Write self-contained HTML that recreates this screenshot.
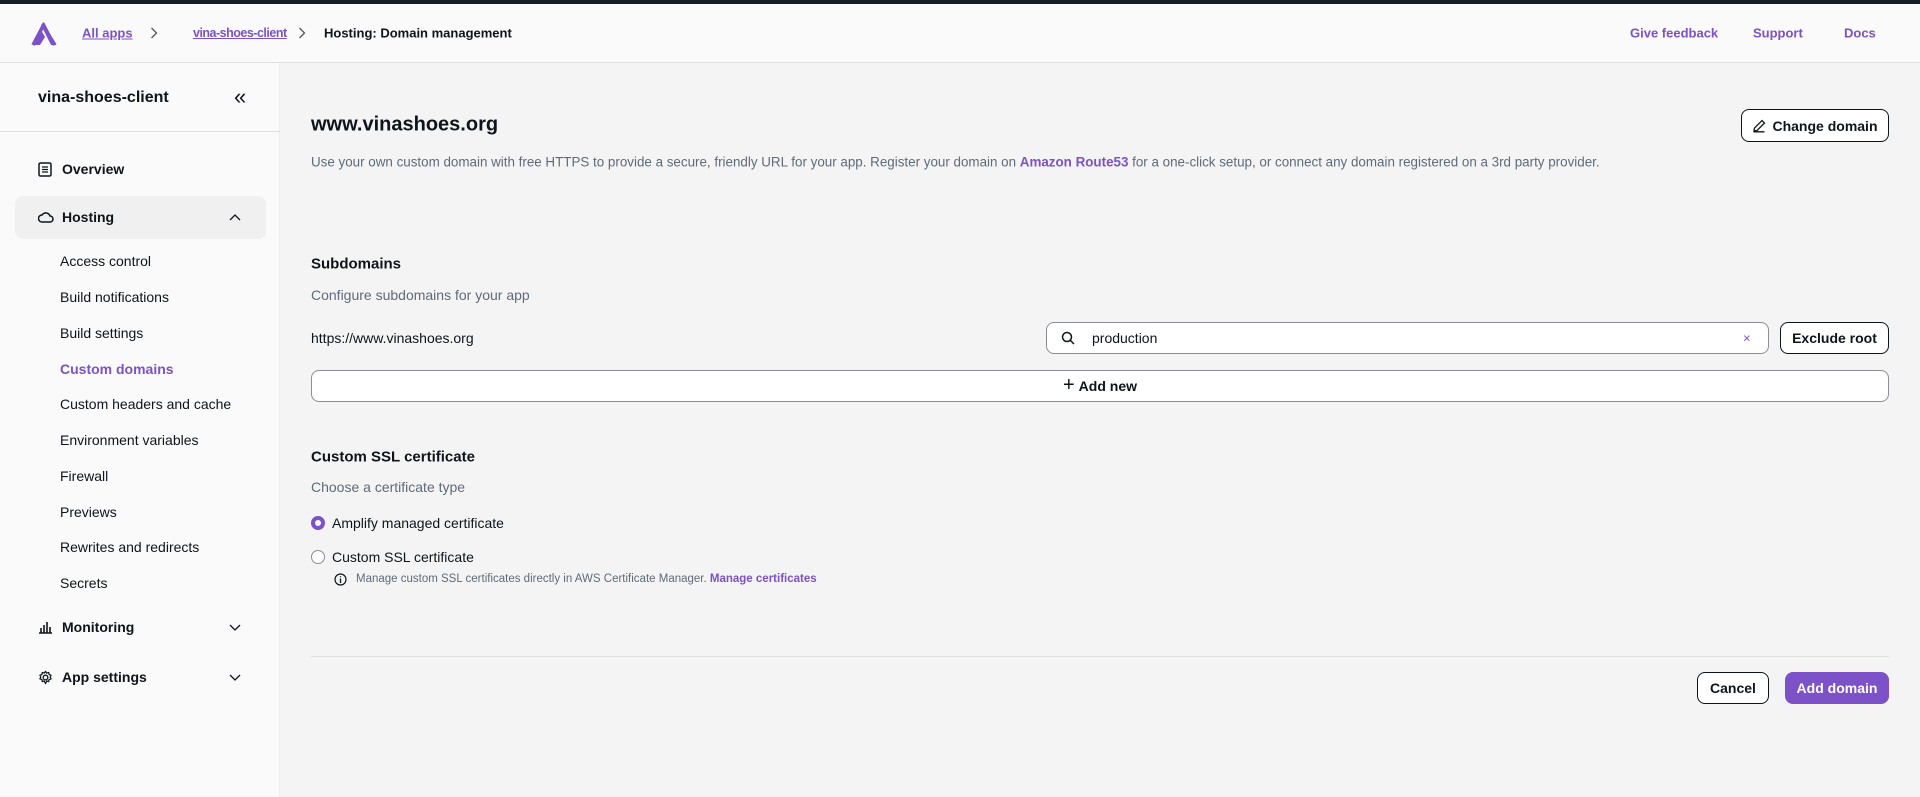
<!DOCTYPE html>
<html><head><meta charset="utf-8"><style>
*{box-sizing:border-box;margin:0;padding:0}
body{width:1920px;height:797px;overflow:hidden;font-family:"Liberation Sans",Arial,sans-serif;color:#0f141a;background:#f4f4f4;position:relative;font-size:14px}
.a{position:absolute}
.top{left:0;top:0;width:1920px;height:4px;background:#161d26}
.hdr{left:0;top:4px;width:1920px;height:59px;background:#fafafa;border-bottom:1px solid #e0e0e0}
.side{left:0;top:63px;width:280px;height:734px;background:#fafafa;border-right:1px solid #eee}
.lnk{color:#7b52c7;text-decoration:underline;font-weight:bold;font-size:13px}
.b{font-weight:bold}
.sub{color:#0f141a;font-size:14px}
.vc{transform:translateY(-50%)}
.btn{border:1px solid #0f141a;border-radius:8px;background:#fff;font-weight:bold;font-size:14px;display:flex;align-items:center;justify-content:center}
.g{color:#5f6b7a}
</style></head><body>
<div class="a top"></div>
<div class="a hdr"></div>
<svg class="a" style="left:31px;top:22px" width="26" height="24" viewBox="0 0 26 24"><path d="M2 23 L10 8 L14 15 L9 23Z M10 3 L13 0 L25 23 L20 23Z" fill="#7b52c7"/><path d="M2 23 L12 4 L24 23" fill="none" stroke="#7b52c7" stroke-width="3.5" stroke-linejoin="miter"/></svg>
<div class="a vc lnk" style="left:82px;top:33px">All apps</div>
<svg class="a" style="left:150px;top:27px" width="8" height="12" viewBox="0 0 8 12"><path d="M1.5 1 L6.5 6 L1.5 11" fill="none" stroke="#555" stroke-width="1.3"/></svg>
<div class="a vc lnk" style="left:193px;top:33px;font-size:12.5px;letter-spacing:-0.5px">vina-shoes-client</div>
<svg class="a" style="left:298px;top:27px" width="8" height="12" viewBox="0 0 8 12"><path d="M1.5 1 L6.5 6 L1.5 11" fill="none" stroke="#555" stroke-width="1.3"/></svg>
<div class="a vc b" style="left:324px;top:33px;font-size:13px">Hosting: Domain management</div>
<div class="a vc b" style="left:1630px;top:33px;color:#7b52c7;font-size:13px">Give feedback</div>
<div class="a vc b" style="left:1753px;top:33px;color:#7b52c7;font-size:13px">Support</div>
<div class="a vc b" style="left:1844px;top:33px;color:#7b52c7;font-size:13px">Docs</div>

<div class="a side"></div>
<div class="a vc b" style="left:38px;top:98px;font-size:16px">vina-shoes-client</div>
<div class="a vc" style="left:234px;top:97px;font-size:22px">&#xAB;</div>
<div class="a" style="left:0;top:131px;width:280px;height:1px;background:#e0e0e0"></div>
<svg class="a" style="left:38px;top:162px" width="14" height="15" viewBox="0 0 14 15"><rect x="1" y="1" width="12" height="13" rx="1.5" fill="none" stroke="#0f141a" stroke-width="1.5"/><path d="M4 5h6M4 7.5h6M4 10h6" stroke="#0f141a" stroke-width="1.3"/></svg>
<div class="a vc b" style="left:62px;top:169px">Overview</div>
<div class="a" style="left:15px;top:196px;width:251px;height:43px;background:#f0f0f0;border-radius:8px"></div>
<svg class="a" style="left:38px;top:211px" width="16" height="12" viewBox="0 0 16 12"><path d="M4 11 H12 A3 3 0 0 0 12 5 A4.5 4.5 0 0 0 4 4 A3.5 3.5 0 0 0 4 11Z" fill="none" stroke="#0f141a" stroke-width="1.5"/></svg>
<div class="a vc b" style="left:62px;top:217px">Hosting</div>
<svg class="a" style="left:229px;top:213px" width="12" height="8" viewBox="0 0 12 8"><path d="M1 7 L6 2 L11 7" fill="none" stroke="#0f141a" stroke-width="1.3"/></svg>
<div class="a vc sub" style="left:60px;top:261px">Access control</div>
<div class="a vc sub" style="left:60px;top:297px">Build notifications</div>
<div class="a vc sub" style="left:60px;top:333px">Build settings</div>
<div class="a vc sub b" style="left:60px;top:369px;color:#7b52c7">Custom domains</div>
<div class="a vc sub" style="left:60px;top:404px">Custom headers and cache</div>
<div class="a vc sub" style="left:60px;top:440px">Environment variables</div>
<div class="a vc sub" style="left:60px;top:476px">Firewall</div>
<div class="a vc sub" style="left:60px;top:512px">Previews</div>
<div class="a vc sub" style="left:60px;top:547px">Rewrites and redirects</div>
<div class="a vc sub" style="left:60px;top:583px">Secrets</div>
<svg class="a" style="left:38px;top:620px" width="15" height="14" viewBox="0 0 15 14"><path d="M1 13H14M3 13V8M6 13V5M9 13V2M12 13V7" stroke="#0f141a" stroke-width="1.6"/></svg>
<div class="a vc b" style="left:62px;top:627px">Monitoring</div>
<svg class="a" style="left:229px;top:624px" width="12" height="8" viewBox="0 0 12 8"><path d="M1 1 L6 6 L11 1" fill="none" stroke="#0f141a" stroke-width="1.3"/></svg>
<svg class="a" style="left:38px;top:670px" width="15" height="15" viewBox="0 0 16 16"><circle cx="8" cy="8" r="2.5" fill="none" stroke="#0f141a" stroke-width="1.4"/><path d="M8 1.5 9.3 3.3 11.5 2.6 11.8 4.8 14 5.5 13 7.5 14 9.5 11.8 10.2 11.5 12.4 9.3 11.7 8 14.5 6.7 11.7 4.5 12.4 4.2 10.2 2 9.5 3 7.5 2 5.5 4.2 4.8 4.5 2.6 6.7 3.3Z" fill="none" stroke="#0f141a" stroke-width="1.3" stroke-linejoin="round"/></svg>
<div class="a vc b" style="left:62px;top:677px">App settings</div>
<svg class="a" style="left:229px;top:674px" width="12" height="8" viewBox="0 0 12 8"><path d="M1 1 L6 6 L11 1" fill="none" stroke="#0f141a" stroke-width="1.3"/></svg>

<div class="a vc b" style="left:311px;top:125px;font-size:20px">www.vinashoes.org</div>
<div class="a btn" style="left:1741px;top:109px;width:148px;height:33px"><svg width="14" height="14" viewBox="0 0 14 14" style="margin-right:6px"><path d="M2 12 L2.5 9 L10 1.5 L12.5 4 L5 11.5Z M1.5 12.8H12.5" fill="none" stroke="#0f141a" stroke-width="1.3"/></svg>Change domain</div>
<div class="a vc g" style="left:311px;top:162px;font-size:13.4px">Use your own custom domain with free HTTPS to provide a secure, friendly URL for your app. Register your domain on <span class="b" style="color:#7b52c7">Amazon Route53</span> for a one-click setup, or connect any domain registered on a 3rd party provider.</div>

<div class="a vc b" style="left:311px;top:264px;font-size:15px">Subdomains</div>
<div class="a vc g" style="left:311px;top:295px">Configure subdomains for your app</div>
<div class="a vc" style="left:311px;top:338px">https://www.vinashoes.org</div>
<div class="a" style="left:1046px;top:322px;width:723px;height:32px;border:1px solid #8c8c94;border-radius:8px;background:#fff"></div>
<svg class="a" style="left:1061px;top:331px" width="14" height="14" viewBox="0 0 14 14"><circle cx="6" cy="6" r="4.5" fill="none" stroke="#0f141a" stroke-width="1.5"/><path d="M9.3 9.3 13 13" stroke="#0f141a" stroke-width="1.5"/></svg>
<div class="a vc" style="left:1092px;top:338px">production</div>
<div class="a vc" style="left:1743px;top:338px;color:#7b52c7;font-size:13px">&#xD7;</div>
<div class="a btn" style="left:1780px;top:322px;width:109px;height:32px">Exclude root</div>
<div class="a btn" style="left:311px;top:370px;width:1578px;height:32px;border-color:#8c8c94"><span style="font-size:20px;font-weight:normal;margin-right:4px;margin-top:-2px">+</span>Add new</div>

<div class="a vc b" style="left:311px;top:457px;font-size:15px">Custom SSL certificate</div>
<div class="a vc g" style="left:311px;top:487px">Choose a certificate type</div>
<div class="a" style="left:311px;top:516px;width:14px;height:14px;border-radius:50%;border:4px solid #7b52c7;background:#fff"></div>
<div class="a vc" style="left:332px;top:523px">Amplify managed certificate</div>
<div class="a" style="left:311px;top:550px;width:14px;height:14px;border-radius:50%;border:1.5px solid #8c8c94;background:#fff"></div>
<div class="a vc" style="left:332px;top:557px">Custom SSL certificate</div>
<svg class="a" style="left:334px;top:573px" width="13" height="13" viewBox="0 0 13 13"><circle cx="6.5" cy="6.5" r="5.5" fill="none" stroke="#0f141a" stroke-width="1.2"/><path d="M6.5 5.5V10M6.5 3.2V4.3" stroke="#0f141a" stroke-width="1.3"/></svg>
<div class="a vc g" style="left:356px;top:579px;font-size:11.5px">Manage custom SSL certificates directly in AWS Certificate Manager. <span class="b" style="color:#7b52c7">Manage certificates</span></div>

<div class="a" style="left:311px;top:656px;width:1578px;height:1px;background:#e0e0e0"></div>
<div class="a btn" style="left:1697px;top:672px;width:72px;height:32px">Cancel</div>
<div class="a btn" style="left:1785px;top:672px;width:104px;height:32px;background:#7d52c9;border-color:#7d52c9;color:#fff">Add domain</div>
</body></html>
